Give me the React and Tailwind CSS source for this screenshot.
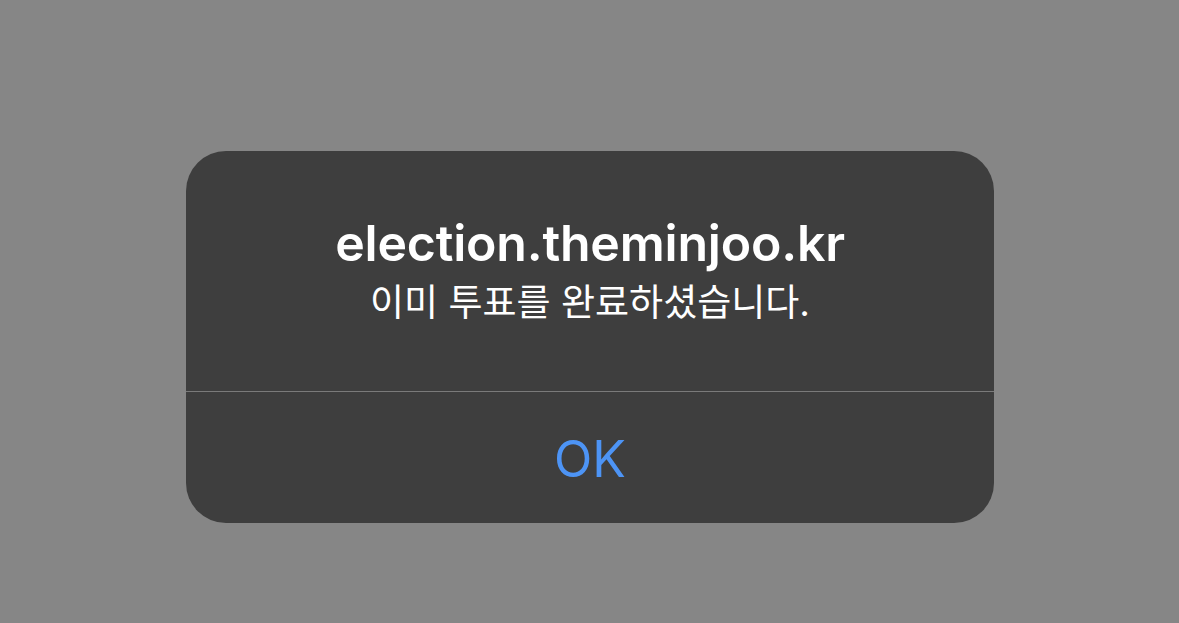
const App = () => {

    return (

        <div className="w-[1179px] h-[623px] bg-[#868686] flex justify-center pt-[151px] pl-[1px]" style={{ fontFamily: 'Inter, "Noto Sans CJK KR", sans-serif' }}>
            <div className="w-[808px] h-[372px] bg-[#3e3e3e] rounded-[40px] flex flex-col overflow-hidden">
                <div className="h-[240px] flex flex-col items-center pt-[62px] text-white">
                    <div className="text-[50px] font-semibold leading-[60px] tracking-[-0.2px]">election.theminjoo.kr</div>
                    <div className="text-[37px] leading-[42px] mt-[9px]">이미 투표를 완료하셨습니다.</div>
                </div>
                <div className="h-px bg-[#7a7a7a]" />
                <button className="flex-1 flex items-center justify-center text-[#4d94f5] text-[50px] leading-none pt-[2px]">
                    OK
                </button>
            </div>
        </div>
    )

}

export default App;
